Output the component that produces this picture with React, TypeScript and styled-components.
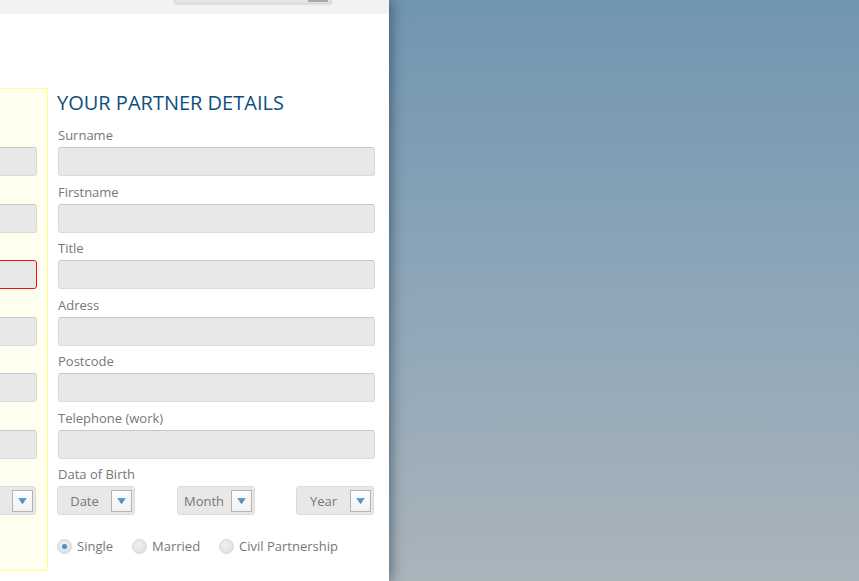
import React from 'react';
import styled, { createGlobalStyle } from 'styled-components';

const GlobalStyle = createGlobalStyle`
  html, body {
    margin: 0;
    padding: 0;
    height: 100%;
  }
  body {
    background: linear-gradient(to bottom, #7196b1 0%, #8ea6b8 50%, #aab4bb 100%);
    font-family: 'Open Sans', 'DejaVu Sans', sans-serif;
    overflow: hidden;
  }
  #root {
    height: 100%;
  }
`;

const Page = styled.div`
  display: flex;
  height: 581px;
`;

const Panel = styled.div`
  width: 389px;
  height: 100%;
  background: #fff;
  box-shadow: 2px 0 12px rgba(20, 40, 60, 0.55);
  display: flex;
  flex-direction: column;
  overflow: hidden;
  position: relative;
  z-index: 1;
`;

const TopBar = styled.div`
  height: 14px;
  flex-shrink: 0;
  background: #f2f2f2;
  display: flex;
  align-items: flex-start;
  padding-left: 174px;
`;

const SearchBox = styled.div`
  width: 158px;
  height: 4px;
  box-sizing: border-box;
  background: #e4e4e4;
  border: 1px solid #d8d8d8;
  border-top: none;
  border-radius: 0 0 3px 3px;
  box-shadow: 0 1px 2px rgba(0, 0, 0, 0.08);
  display: flex;
  justify-content: flex-end;
  padding-right: 3px;
`;

const SearchButton = styled.div`
  width: 20px;
  height: 2px;
  background: #a8a8a8;
`;

const Content = styled.div`
  display: flex;
  align-items: flex-start;
  gap: 9px;
  padding-top: 74px;
`;

const Column = styled.div`
  width: 318px;
  flex-shrink: 0;
`;

const Heading = styled.h2`
  margin: 2px 0 10px;
  font-family: 'Open Sans', 'DejaVu Sans', sans-serif;
  font-weight: 400;
  font-size: 20px;
  line-height: 26px;
  color: #0e4f7e;
`;

const OtherColumn = styled.div`
  width: 348px;
  margin-left: -300px;
  height: 483px;
  box-sizing: border-box;
  background: #fffff0;
  border: 1px solid #ffff88;
  padding: 0 10px 0 20px;
  flex-shrink: 0;

  ${Heading} {
    margin-top: 1px;
  }
`;

const Field = styled.div`
  margin-bottom: 6.5px;
`;

const Label = styled.div`
  font-size: 13px;
  line-height: 18px;
  color: #777;
  padding-left: 1px;
  margin-bottom: 3px;
`;

const Input = styled.div<{ $error?: boolean }>`
  height: 29px;
  box-sizing: border-box;
  background: #e8e8e8;
  border: 1px solid ${p => (p.$error ? '#ee1111' : '#dadada')};
  border-top-color: ${p => (p.$error ? '#ee1111' : '#c8c8c8')};
  border-radius: 3px;
  margin-left: 1px;
`;

const SelectRow = styled.div`
  display: flex;
  justify-content: space-between;
  padding-right: 1px;
`;

const Select = styled.div<{ $grow?: boolean }>`
  width: 78px;
  height: 29px;
  box-sizing: border-box;
  background: #e8e8e8;
  border: 1px solid #dcdcdc;
  border-radius: 3px;
  display: flex;
  align-items: center;
  padding-right: 2px;
  ${p => (p.$grow ? 'width: 100%;' : '')}
`;

const SelectText = styled.span`
  flex: 1;
  text-align: center;
  font-size: 13px;
  color: #777;
`;

const ArrowBox = styled.div`
  width: 21px;
  height: 22px;
  box-sizing: border-box;
  background: linear-gradient(#fdfdfd, #f1f1f1);
  border: 1px solid #b3b3b3;
  display: flex;
  align-items: center;
  justify-content: center;
`;

const RadioRow = styled.div`
  display: flex;
  align-items: center;
  margin-top: 22px;
`;

const RadioItem = styled.label`
  display: flex;
  align-items: center;
  gap: 5px;
  margin-right: 19px;
  font-size: 13px;
  color: #777;
`;

const RadioCircle = styled.span<{ $checked?: boolean }>`
  width: 15px;
  height: 15px;
  box-sizing: border-box;
  border-radius: 50%;
  background: radial-gradient(circle at 40% 35%, #f0f0f0, #dcdcdc);
  border: 1px solid #d6d6d6;
  display: flex;
  align-items: center;
  justify-content: center;
  &::after {
    content: '';
    width: 5px;
    height: 5px;
    border-radius: 50%;
    background: #4a90c8;
    display: ${p => (p.$checked ? 'block' : 'none')};
  }
`;

const Arrow = () => (
  <ArrowBox>
    <svg width="9" height="6" viewBox="0 0 9 6">
      <defs>
        <linearGradient id="ag" x1="0" y1="0" x2="0" y2="1">
          <stop offset="0" stopColor="#6aa6d6" />
          <stop offset="1" stopColor="#2f78b5" />
        </linearGradient>
      </defs>
      <path d="M0 0 H9 L4.5 6 Z" fill="url(#ag)" />
    </svg>
  </ArrowBox>
);

const fields = ['Surname', 'Firstname', 'Title', 'Adress', 'Postcode', 'Telephone (work)'];

const App: React.FC = () => (
  <>
    <GlobalStyle />
    <Page>
      <Panel>
        <TopBar>
          <SearchBox>
            <SearchButton />
          </SearchBox>
        </TopBar>
        <Content>
          <OtherColumn>
            <Heading>YOUR DETAILS</Heading>
            {fields.map((f, i) => (
              <Field key={f}>
                <Label>{f}</Label>
                <Input $error={i === 2} />
              </Field>
            ))}
            <Field>
              <Label>Data of Birth</Label>
              <SelectRow>
                <Select $grow>
                  <SelectText>Year</SelectText>
                  <Arrow />
                </Select>
              </SelectRow>
            </Field>
          </OtherColumn>
          <Column>
            <Heading>YOUR PARTNER DETAILS</Heading>
            {fields.map(f => (
              <Field key={f}>
                <Label>{f}</Label>
                <Input />
              </Field>
            ))}
            <Field>
              <Label>Data of Birth</Label>
              <SelectRow>
                <Select>
                  <SelectText>Date</SelectText>
                  <Arrow />
                </Select>
                <Select>
                  <SelectText>Month</SelectText>
                  <Arrow />
                </Select>
                <Select>
                  <SelectText>Year</SelectText>
                  <Arrow />
                </Select>
              </SelectRow>
            </Field>
            <RadioRow>
              <RadioItem>
                <RadioCircle $checked />
                Single
              </RadioItem>
              <RadioItem>
                <RadioCircle />
                Married
              </RadioItem>
              <RadioItem>
                <RadioCircle />
                Civil Partnership
              </RadioItem>
            </RadioRow>
          </Column>
        </Content>
      </Panel>
    </Page>
  </>
);

export default App;
